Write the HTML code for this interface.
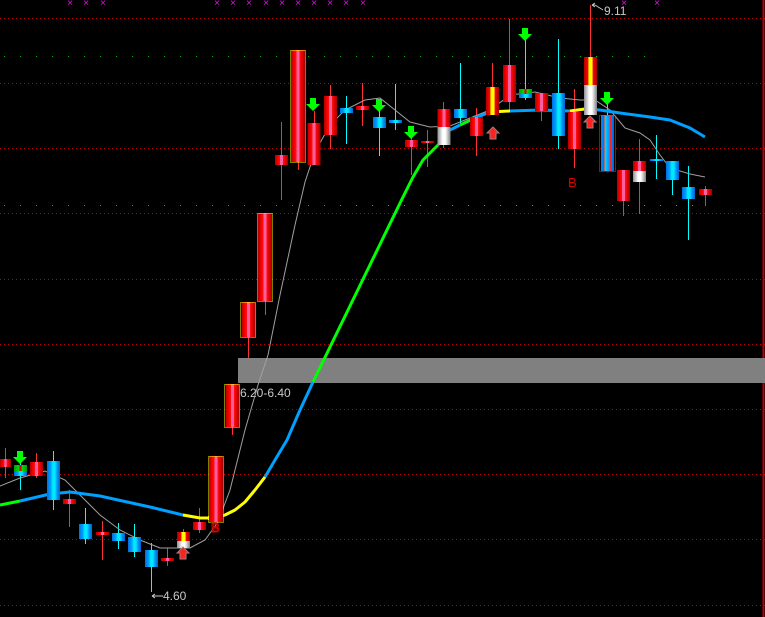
<!DOCTYPE html>
<html><head><meta charset="utf-8"><style>
html,body{margin:0;padding:0;background:#000;width:765px;height:617px;overflow:hidden}
svg{display:block}
text{font-family:"Liberation Sans",sans-serif}
</style></head><body>
<svg width="765" height="617" viewBox="0 0 765 617" xmlns="http://www.w3.org/2000/svg">
<defs>
<linearGradient id="r" x1="0" x2="1" y1="0" y2="0">
<stop offset="0" stop-color="#b00000"/><stop offset="0.25" stop-color="#ff0000"/><stop offset="0.38" stop-color="#ff1010"/><stop offset="0.4" stop-color="#ff5fa0"/><stop offset="0.6" stop-color="#ff5fa0"/><stop offset="0.62" stop-color="#ff1010"/><stop offset="0.8" stop-color="#e00000"/><stop offset="1" stop-color="#a00000"/></linearGradient>
<linearGradient id="b" x1="0" x2="1" y1="0" y2="0">
<stop offset="0" stop-color="#0070e0"/><stop offset="0.3" stop-color="#00a0ff"/><stop offset="0.42" stop-color="#00e8ff"/><stop offset="0.6" stop-color="#00e8ff"/><stop offset="0.8" stop-color="#0090f0"/><stop offset="1" stop-color="#0060d0"/></linearGradient>
<linearGradient id="w" x1="0" x2="1" y1="0" y2="0">
<stop offset="0" stop-color="#909090"/><stop offset="0.4" stop-color="#ffffff"/><stop offset="0.6" stop-color="#ffffff"/><stop offset="1" stop-color="#808080"/></linearGradient>
<linearGradient id="ry" x1="0" x2="1" y1="0" y2="0">
<stop offset="0" stop-color="#b00000"/><stop offset="0.3" stop-color="#ff0000"/><stop offset="0.38" stop-color="#ffff00"/><stop offset="0.62" stop-color="#ffff00"/><stop offset="0.7" stop-color="#ff0000"/><stop offset="1" stop-color="#a00000"/></linearGradient>
<linearGradient id="gb" x1="0" x2="1" y1="0" y2="0">
<stop offset="0" stop-color="#00a000"/><stop offset="0.4" stop-color="#00e000"/><stop offset="0.42" stop-color="#e00000"/><stop offset="0.58" stop-color="#e00000"/><stop offset="0.6" stop-color="#00e000"/><stop offset="1" stop-color="#00a000"/></linearGradient>
<linearGradient id="bs" x1="0" x2="1" y1="0" y2="0">
<stop offset="0" stop-color="#0080ff"/><stop offset="0.15" stop-color="#0080ff"/><stop offset="0.16" stop-color="#ff2020"/><stop offset="0.28" stop-color="#ff2020"/><stop offset="0.29" stop-color="#00e8ff"/><stop offset="0.55" stop-color="#00a0ff"/><stop offset="0.7" stop-color="#0090ff"/><stop offset="0.71" stop-color="#ff2020"/><stop offset="0.82" stop-color="#ff2020"/><stop offset="0.83" stop-color="#0080ff"/><stop offset="1" stop-color="#0060e0"/></linearGradient>
</defs>

<g stroke="#c00000" stroke-width="1" stroke-dasharray="1,3">
<line x1="0" x2="765" y1="18.5" y2="18.5"/><line x1="0" x2="765" y1="83.5" y2="83.5"/><line x1="0" x2="765" y1="148.5" y2="148.5"/><line x1="0" x2="765" y1="213.5" y2="213.5"/><line x1="0" x2="765" y1="279.5" y2="279.5"/><line x1="0" x2="765" y1="344.5" y2="344.5"/><line x1="0" x2="765" y1="409.5" y2="409.5"/><line x1="0" x2="765" y1="474.5" y2="474.5"/><line x1="0" x2="765" y1="539.5" y2="539.5"/><line x1="0" x2="765" y1="605.5" y2="605.5"/>
</g>
<g stroke="#00c000" stroke-width="1" stroke-dasharray="1,15">
<line x1="4" x2="660" y1="56.5" y2="56.5"/><line x1="4" x2="330" y1="205.5" y2="205.5"/>
</g>
<g stroke="#c06080" stroke-width="1" stroke-dasharray="1,15">
<line x1="340" x2="700" y1="205.5" y2="205.5"/>
</g>
<line x1="763.5" x2="763.5" y1="0" y2="617" stroke="#c00000" stroke-width="2"/>

<rect x="238" y="358" width="527" height="25" fill="#808080"/>
<text x="240" y="397" fill="#c8c8c8" font-size="12">6.20-6.40</text>

<g fill="#ff00ff" font-size="10" text-anchor="middle">
<text x="70" y="6">×</text><text x="86" y="6">×</text><text x="103" y="6">×</text>
<text x="217" y="6">×</text><text x="233" y="6">×</text><text x="249" y="6">×</text><text x="266" y="6">×</text><text x="282" y="6">×</text><text x="298" y="6">×</text><text x="314" y="6">×</text><text x="330" y="6">×</text><text x="346" y="6">×</text><text x="363" y="6">×</text><text x="624" y="6">×</text><text x="657" y="6">×</text>
</g>

<g stroke="#ff3030" stroke-width="1">
<line x1="5.5" x2="5.5" y1="448" y2="478"/><line x1="36.5" x2="36.5" y1="453" y2="478"/><line x1="69.5" x2="69.5" y1="490" y2="527"/><line x1="102.5" x2="102.5" y1="521" y2="560"/><line x1="167.5" x2="167.5" y1="548" y2="566"/><line x1="183.5" x2="183.5" y1="529" y2="548"/><line x1="199.5" x2="199.5" y1="508" y2="533"/><line x1="232.5" x2="232.5" y1="384" y2="435"/><line x1="248.5" x2="248.5" y1="337" y2="358"/><line x1="265.5" x2="265.5" y1="301" y2="315"/><line x1="281.5" x2="281.5" y1="122" y2="200"/><line x1="298.5" x2="298.5" y1="150" y2="170"/><line x1="314.5" x2="314.5" y1="111" y2="165"/><line x1="330.5" x2="330.5" y1="85" y2="149"/><line x1="362.5" x2="362.5" y1="83" y2="126"/><line x1="411.5" x2="411.5" y1="136" y2="175"/><line x1="427.5" x2="427.5" y1="130" y2="167"/><line x1="443.5" x2="443.5" y1="102" y2="148"/><line x1="476.5" x2="476.5" y1="108" y2="156"/><line x1="492.5" x2="492.5" y1="63" y2="115"/><line x1="509.5" x2="509.5" y1="19" y2="112"/><line x1="541.5" x2="541.5" y1="93" y2="121"/><line x1="574.5" x2="574.5" y1="89" y2="168"/><line x1="590.5" x2="590.5" y1="5" y2="115"/><line x1="623.5" x2="623.5" y1="170" y2="216"/><line x1="639.5" x2="639.5" y1="139" y2="214"/><line x1="705.5" x2="705.5" y1="186" y2="206"/>
</g>
<g stroke="#00ffff" stroke-width="1">
<line x1="20.5" x2="20.5" y1="462" y2="490"/><line x1="53.5" x2="53.5" y1="451" y2="510"/><line x1="85.5" x2="85.5" y1="508" y2="544"/><line x1="118.5" x2="118.5" y1="523" y2="549"/><line x1="134.5" x2="134.5" y1="524" y2="557"/><line x1="151.5" x2="151.5" y1="543" y2="592"/><line x1="346.5" x2="346.5" y1="96" y2="144"/><line x1="379.5" x2="379.5" y1="110" y2="156"/><line x1="395.5" x2="395.5" y1="84" y2="130"/><line x1="460.5" x2="460.5" y1="63" y2="123"/><line x1="525.5" x2="525.5" y1="35" y2="100"/><line x1="558.5" x2="558.5" y1="39" y2="149"/><line x1="656.5" x2="656.5" y1="135" y2="179"/><line x1="672.5" x2="672.5" y1="162" y2="195"/><line x1="688.5" x2="688.5" y1="166" y2="240"/><line x1="607.5" x2="607.5" y1="100" y2="115"/>
</g>

<polyline fill="none" stroke="#a0a0a0" stroke-width="1" points="0,486 20,478 45,471 65,480 80,495 100,515 120,530 140,540 160,548 190,548 205,540 218,522 230,490 245,430 258,385 268,355 280,295 295,225 305,182 315,152 330,125 345,110 365,100 380,98 395,110 410,122 430,127 450,126 470,118 490,110 510,95 535,92 560,98 580,100 595,100 610,110 625,128 640,133 650,140 660,155 670,168 690,174 705,177"/>
<g fill="none" stroke-width="3" stroke-linejoin="round">
<polyline stroke="#00ff00" points="0,505 10,503 20,501"/>
<polyline stroke="#00a0ff" points="20,501 50,494 70,492 100,496 150,507 183,515"/>
<polyline stroke="#ffff00" points="183,515 200,518 215,518 225,515 235,510 245,502 255,490 265,477"/>
<polyline stroke="#00a0ff" points="265,477 275,460 287,440 300,410 313,382"/>
<polyline stroke="#00ff00" points="313,382 403,197 413,177 423,160 438,145"/>
<polyline stroke="#00a0ff" points="438,145 450,130 460,125"/>
<polyline stroke="#00ff00" points="460,125 475,118"/>
<polyline stroke="#00a0ff" points="475,118 490,112"/>
<polyline stroke="#ffff00" points="490,112 510,111"/>
<polyline stroke="#00a0ff" points="510,111 540,110 570,111"/>
<polyline stroke="#ffff00" points="570,111 585,109"/>
<polyline stroke="#00a0ff" points="585,109 600,110 620,113 650,117 670,120 690,128 705,137"/>
</g>

<rect x="0" y="459" width="11" height="8" fill="url(#r)"/>
<rect x="14" y="465" width="13" height="6" fill="url(#gb)"/><rect x="14" y="471" width="13" height="5" fill="url(#b)"/>
<rect x="30" y="462" width="13" height="14" fill="url(#r)"/>
<rect x="47" y="461" width="13" height="39" fill="url(#b)"/>
<rect x="63" y="499" width="13" height="5" fill="url(#r)"/>
<rect x="79" y="524" width="13" height="15" fill="url(#b)"/>
<rect x="96" y="532" width="13" height="3" fill="url(#r)"/>
<rect x="112" y="533" width="13" height="8" fill="url(#b)"/>
<rect x="128" y="537" width="13" height="15" fill="url(#b)"/>
<rect x="145" y="550" width="13" height="17" fill="url(#b)"/>
<rect x="161" y="558" width="13" height="3" fill="url(#r)"/>
<rect x="177" y="532" width="13" height="9" fill="url(#ry)"/><rect x="177" y="541" width="13" height="7" fill="url(#w)"/>
<rect x="193" y="522" width="13" height="8" fill="url(#r)"/>
<rect x="209" y="456" width="14" height="66" fill="url(#r)"/>
<rect x="225.5" y="384" width="14" height="43" fill="url(#r)"/>
<rect x="241.5" y="302" width="14" height="35" fill="url(#r)"/>
<rect x="258" y="213" width="14" height="88" fill="url(#r)"/>
<rect x="275" y="155" width="13" height="10" fill="url(#r)"/>
<rect x="291" y="50" width="14" height="112" fill="url(#r)"/>
<rect x="307.5" y="123" width="13" height="42" fill="url(#r)"/>
<rect x="324" y="96" width="13" height="39" fill="url(#r)"/>
<rect x="340" y="108" width="13" height="5" fill="url(#b)"/>
<rect x="356" y="106" width="13" height="4" fill="url(#r)"/>
<rect x="373" y="117" width="13" height="11" fill="url(#b)"/>
<rect x="389" y="120" width="13" height="3" fill="url(#b)"/>
<rect x="405" y="140" width="13" height="7" fill="url(#r)"/>
<rect x="421" y="141" width="13" height="2" fill="url(#r)"/>
<rect x="437.5" y="109" width="13" height="18" fill="url(#r)"/><rect x="437.5" y="127" width="13" height="18" fill="url(#w)"/>
<rect x="454" y="109" width="13" height="9" fill="url(#b)"/>
<rect x="470" y="117" width="13" height="19" fill="url(#r)"/>
<rect x="486" y="87" width="13" height="28" fill="url(#ry)"/>
<rect x="503" y="65" width="13" height="37" fill="url(#r)"/>
<rect x="519" y="89" width="13" height="5" fill="url(#gb)"/><rect x="519" y="94" width="13" height="4" fill="url(#b)"/>
<rect x="535" y="93" width="13" height="18" fill="url(#r)"/>
<rect x="552" y="93" width="13" height="43" fill="url(#b)"/>
<rect x="568" y="112" width="13" height="37" fill="url(#r)"/>
<rect x="584" y="57" width="13" height="28" fill="url(#ry)"/><rect x="584" y="85" width="13" height="30" fill="url(#w)"/>
<rect x="601" y="115" width="13" height="56" fill="url(#bs)"/>
<rect x="617" y="170" width="13" height="31" fill="url(#r)"/>
<rect x="633" y="161" width="13" height="10" fill="url(#r)"/><rect x="633" y="171" width="13" height="11" fill="url(#w)"/>
<rect x="650" y="159" width="13" height="2" fill="url(#b)"/>
<rect x="666" y="161" width="13" height="19" fill="url(#b)"/>
<rect x="682" y="187" width="13" height="12" fill="url(#b)"/>
<rect x="699" y="189" width="13" height="6" fill="url(#r)"/>

<g fill="none" stroke="#ffff00" stroke-width="1" stroke-dasharray="1,1">
<rect x="208.5" y="456.5" width="15" height="66"/>
<rect x="224.5" y="384.5" width="15" height="43"/>
<rect x="240.5" y="302.5" width="15" height="35"/>
<rect x="257.5" y="213.5" width="15" height="88"/>
<rect x="290.5" y="50.5" width="15" height="112"/>
</g>
<rect x="599.5" y="115.5" width="16" height="56" fill="none" stroke="#00c000" stroke-dasharray="1,1"/>

<g fill="#00ff00">
<path d="M17,451h6v6h4l-7,7l-7,-7h4z"/>
<path d="M310,98h6v6h4l-7,7l-7,-7h4z"/>
<path d="M376,99h6v6h4l-7,7l-7,-7h4z"/>
<path d="M408,126h6v6h4l-7,7l-7,-7h4z"/>
<path d="M522,28h6v6h4l-7,7l-7,-7h4z"/>
<path d="M604,92h6v6h4l-7,7l-7,-7h4z"/>
</g>
<g fill="#ff2020" stroke="#a08080" stroke-width="1">
<path d="M183,547l6,6h-3v6h-6v-6h-3z"/>
<path d="M493,127l6,6h-3v6h-6v-6h-3z"/>
<path d="M590,116l6,6h-3v6h-6v-6h-3z"/>
</g>
<text x="568" y="187" fill="#e00000" font-size="13">B</text>
<text x="211" y="532" fill="none" stroke="#e00000" stroke-width="1" font-size="13">B</text>

<text x="604" y="15" fill="#c8c8c8" font-size="12">9.11</text>
<path d="M592,5h3M592,5l3,-2M592,5l3,2M595,5l8,5" stroke="#c8c8c8" fill="none"/>
<text x="163" y="600" fill="#c8c8c8" font-size="12">4.60</text>
<path d="M152,596h11M152,596l3,-2M152,596l3,2" stroke="#c8c8c8" fill="none"/>
</svg>
</body></html>
